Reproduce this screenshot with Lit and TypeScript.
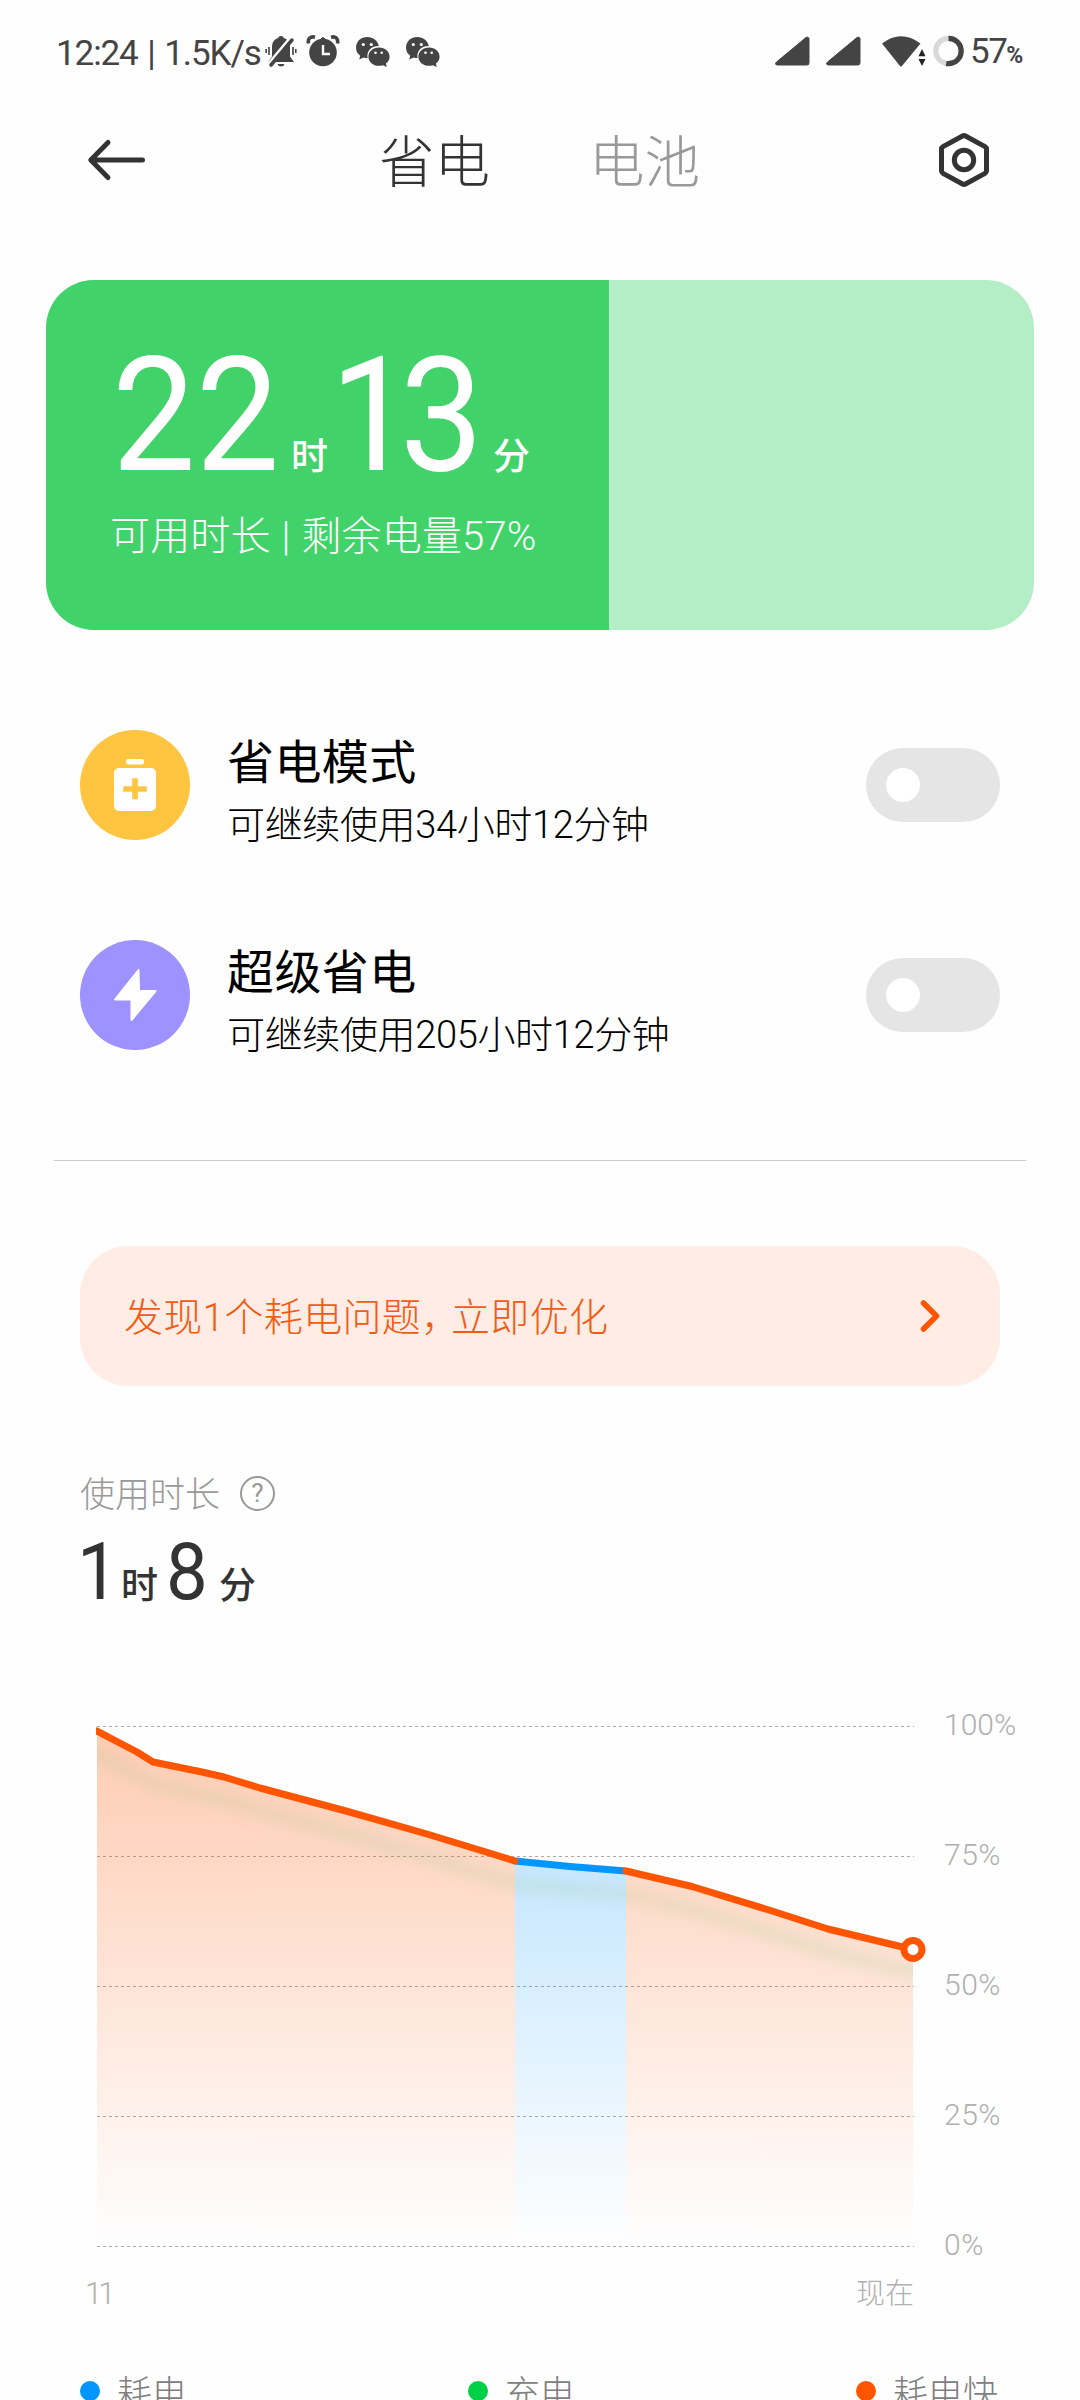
import { LitElement, html, svg, css } from "lit";
import { customElement, property } from "lit/decorators.js";

const fonts = css`
  :host {
    font-family: Roboto, "Noto Sans CJK SC", sans-serif;
    font-weight: 300;
  }
  * { box-sizing: border-box; }
  svg { display: block; flex: none; }
`;

@customElement("status-bar")
class StatusBar extends LitElement {
  static styles = [fonts, css`
    :host { display: block; height: 105px; color: #444; }
    .bar { display: flex; align-items: center; height: 105px; padding: 0 55px 0 56px; font-weight: 400; }
    .time { width: 209px; padding-top: 2px; font-size: 35px; line-height: 40px; white-space: nowrap; letter-spacing: -1.1px; word-spacing: 2px; }
    .icons, .right { display: flex; align-items: center; }
    .icons { padding-bottom: 3px; }
    .right { margin-left: auto; padding-bottom: 3px; }
    .bell { margin-right: 9px; }
    .alarm { margin-right: 15px; }
    .chat { margin-right: 14px; }
    .signal { margin-right: 15px; }
    .wifi { margin: 0 6px 0 4px; }
    .pct { width: 61px; padding: 5px 0 0 6px; font-size: 35px; line-height: 40px; white-space: nowrap; letter-spacing: -1.5px; }
    .sign { font-size: 23px; font-weight: 700; letter-spacing: 0; }
  `];

  private chat() {
    return html`<svg class="chat" width="36" height="34" viewBox="0 0 36 34" fill="#444">
      <path d="M12.500 3C5.600 3 1 7.700 1 13.600c0 3.400 1.500 6.200 4.200 8.200l-1 3.700 4.500-2.100c1.200.4 2.500.5 3.800.5C11.500 16.500 16.500 12 23.800 12 22.600 6.600 18.200 3 12.500 3z"/>
      <path d="M24 13.500c-6 0-10.600 4.100-10.600 9.200S18 31.800 24 31.800c1.400 0 2.700-.2 3.800-.6l4 1.800-.9-3.400c2.300-1.700 3.700-4.200 3.700-6.900 0-5.100-4.600-9.200-10.600-9.200z"/>
      <g fill="#fff"><circle cx="8.300" cy="10.500" r="1.600"/><circle cx="16.300" cy="10.500" r="1.600"/><circle cx="20.500" cy="18.800" r="1.300"/><circle cx="26.700" cy="18.800" r="1.300"/></g>
    </svg>`;
  }

  private signal() {
    return html`<svg class="signal" width="36" height="32" viewBox="0 0 36 32"><path d="M1.500 27L31 2.500q2-1.500 3 1V28q0 2-2 2H2q-3-.5-.5-3z" fill="#444" stroke="#444" stroke-width="1" stroke-linejoin="round"/></svg>`;
  }

  render() {
    return html`<div class="bar">
      <div class="time">12:24 | 1.5K/s</div>
      <div class="icons">
        <svg class="bell" width="32" height="34" viewBox="0 0 32 34">
          <path d="M16 2c1.700 0 2.500.8 2.600 2 4.300 1.300 6.400 4.500 6.400 9v9.500l4 5.500H3l4-5.500V13c0-4.500 2.100-7.700 6.400-9 .1-1.200.9-2 2.600-2z" fill="#444"/>
          <path d="M12.500 30h7q-.7 2.500-3.500 2.500T12.500 30z" fill="#444"/>
          <path d="M4 13v8M1.200 15v4M28 13v8M30.800 15v4" stroke="#444" stroke-width="1.600"/>
          <path d="M4 30L25 5" stroke="#fff" stroke-width="4"/>
          <path d="M6 31L27 6" stroke="#444" stroke-width="3.500" stroke-linecap="round"/>
        </svg>
        <svg class="alarm" width="34" height="34" viewBox="0 0 34 34">
          <circle cx="17" cy="18.500" r="13.800" fill="#444"/>
          <path d="M15 5q2-3 4 0z" fill="#444" stroke="#444"/>
          <path d="M2.500 9.500C1.500 4.500 4.500 2 9 3.200M31.500 9.500C32.500 4.500 29.500 2 25 3.200" fill="none" stroke="#444" stroke-width="3.600"/>
          <path d="M17 11v9h7" fill="none" stroke="#fff" stroke-width="2.400"/>
        </svg>
        ${this.chat()}${this.chat()}
      </div>
      <div class="right">
        ${this.signal()}${this.signal()}
        <svg class="wifi" width="46" height="34" viewBox="0 0 46 34">
          <path d="M1 9.500Q20 -5 39.500 9.500L20.800 32.200q-.8.800-1.600 0z" fill="#444"/>
          <path d="M41 14l3.500 8h-7zM41 33l-3.500-8h7z" fill="#fff" stroke="#fff" stroke-width="3"/>
          <path d="M37.500 22.200L41 15l3.500 7.200zM37.500 25L41 32l3.500-7z" fill="#222"/>
        </svg>
        <svg width="31" height="34" viewBox="0 0 31 34">
          <circle cx="15.500" cy="17" r="12.700" fill="none" stroke="#d9d9d9" stroke-width="5.200"/>
          <circle cx="15.500" cy="17" r="12.700" fill="none" stroke="#444" stroke-width="5.200" pathLength="100" stroke-dasharray="53 47" transform="rotate(-90 15.500 17)"/>
        </svg>
        <div class="pct">57<span class="sign">%</span></div>
      </div>
    </div>`;
  }
}

@customElement("page-header")
class PageHeader extends LitElement {
  static styles = [fonts, css`
    :host { display: block; }
    .head { display: flex; align-items: center; height: 110px; padding: 0 88px 0 86px; }
    .tabs { display: flex; gap: 99px; margin: 0 auto 0 233px; padding-top: 8px; font-size: 55.500px; line-height: 64px; color: #333; }
    .idle { color: #999; }
  `];
  render() {
    return html`<div class="head">
      <svg width="60" height="44" viewBox="0 0 60 44"><path d="M22 4.500L4.800 22 22 39.500M5 22h51.500" fill="none" stroke="#333" stroke-width="5" stroke-linecap="round" stroke-linejoin="round"/></svg>
      <div class="tabs"><span>省电</span><span class="idle">电池</span></div>
      <svg width="56" height="58" viewBox="0 0 56 58" fill="none" stroke="#333" stroke-width="5">
        <path d="M26.500 5Q28 4.200 29.500 5L49 15.600Q50.500 16.500 50.500 18.200V39.800Q50.500 41.500 49 42.400L29.500 53Q28 53.800 26.500 53L7 42.400Q5.500 41.500 5.500 39.800V18.200Q5.500 16.500 7 15.600z"/>
        <circle cx="28" cy="29" r="9.700"/>
      </svg>
    </div>`;
  }
}

@customElement("battery-card")
class BatteryCard extends LitElement {
  @property({ type: Number }) level = 0;
  static styles = [fonts, css`
    :host { display: block; margin: 65px 46px 0; }
    .card { height: 350px; border-radius: 48px; background: #b3eec6; overflow: hidden; color: #fff; }
    .fill { height: 350px; background: #41d369; padding: 66px 0 0 64px; white-space: nowrap; }
    .big { display: flex; align-items: baseline; height: 140px; line-height: 140px; font-size: 160px; font-weight: 400; padding-left: 2px; }
    .hour, .minute { transform: scaleX(0.93); transform-origin: left; }
    .hour { width: 180px; }
    .minute { width: 163px; letter-spacing: -15px; }
    .unit { font-size: 37px; font-weight: 500; }
    .unit-hour { width: 39px; margin-left: -1px; }
    .sub { margin-top: 27px; font-size: 40px; line-height: 48px; letter-spacing: 0.15px; word-spacing: 1px; }
  `];
  render() {
    return html`<div class="card"><div class="fill" style="width:${this.level}%">
      <div class="big"><span class="hour">22</span><span class="unit unit-hour">时</span><span class="minute">13</span><span class="unit">分</span></div>
      <div class="sub">可用时长 | 剩余电量${this.level}%</div>
    </div></div>`;
  }
}

@customElement("mode-row")
class ModeRow extends LitElement {
  @property() name = "";
  @property() detail = "";
  @property() kind = "saver";
  static styles = [fonts, css`
    :host { display: block; margin: 0 80px; }
    .row { display: flex; align-items: center; height: 110px; }
    .text { flex: 1; height: 110px; padding: 6px 0 0 37px; color: #000; white-space: nowrap; }
    .name { font-size: 47px; line-height: 54px; font-weight: 400; letter-spacing: 0.4px; }
    .detail { margin-top: 13px; font-size: 38px; line-height: 45px; letter-spacing: -0.35px; }
    .toggle { width: 134px; height: 74px; border-radius: 37px; background: #e5e5e5; padding: 20px; }
    .knob { width: 34px; height: 34px; border-radius: 17px; background: #fff; }
  `];
  private icon() {
    return this.kind === "saver"
      ? html`<svg width="110" height="110" viewBox="0 0 110 110">
          <circle cx="55" cy="55" r="55" fill="#ffc541"/>
          <rect x="46" y="29" width="18" height="5.500" rx="2" fill="#fff"/>
          <rect x="34" y="38" width="42" height="43" rx="5" fill="#fff"/>
          <path d="M55 51v15.500M46 59h18" stroke="#ffc541" stroke-width="5.600" stroke-linecap="square"/>
        </svg>`
      : html`<svg width="110" height="110" viewBox="0 0 110 110">
          <circle cx="55" cy="55" r="55" fill="#9d92ff"/>
          <path d="M58.500 30L35 59.500H51.500V80L75.500 51H59z" fill="#fff" stroke="#fff" stroke-width="2" stroke-linejoin="round"/>
        </svg>`;
  }
  render() {
    return html`<div class="row">${this.icon()}
      <div class="text"><div class="name">${this.name}</div><div class="detail">${this.detail}</div></div>
      <div class="toggle"><div class="knob"></div></div>
    </div>`;
  }
}

type Point = [number, number];
const before: Point[] = [[97, 1731], [137, 1752], [153, 1762], [202, 1772], [224, 1777], [260, 1788], [346, 1811], [427, 1834], [486, 1852], [515, 1861]];
const slow: Point[] = [[515, 1861], [570, 1866.500], [626, 1871]];
const after: Point[] = [[626, 1871], [692, 1886.500], [769, 1910], [828, 1929], [913, 1949.500]];
const trace = (pts: Point[]) => pts.map((p) => p.join(",")).join(" ");
const area = (pts: Point[]) => `${trace(pts)} ${pts[pts.length - 1][0]},2246 ${pts[0][0]},2246`;

@customElement("usage-chart")
class UsageChart extends LitElement {
  static styles = [fonts, css`
    :host { display: block; color: #b0b0b0; font-size: 30px; }
    .plot { display: flex; padding-left: 80px; height: 560px; }
    .levels { display: flex; flex-direction: column; padding: 0 0 0 16px; margin-top: -40px; }
    .level { height: 130px; line-height: 130px; letter-spacing: 0.5px; }
    .level:first-child { letter-spacing: 0; }
    .times { display: flex; justify-content: space-between; margin: 12px 166px 0 85px; line-height: 44px; font-size: 29px; }
    .start { letter-spacing: -4px; font-size: 31px; }
  `];
  render() {
    const whole = [...before, ...slow.slice(1), ...after.slice(1)];
    const shadow: Point[] = [[60, 1735], ...whole.map(([x, y]): Point => [x, y + 23]), [960, 1985]];
    return html`<div class="plot">
      <svg width="848" height="560" viewBox="80 1700 848 560" fill="none">
        <defs>
          <linearGradient id="warm" gradientUnits="userSpaceOnUse" x1="0" y1="1726" x2="0" y2="2246"><stop offset="0" stop-color="#ff5500" stop-opacity=".3"/><stop offset="1" stop-color="#ff5500" stop-opacity="0"/></linearGradient>
          <linearGradient id="cool" gradientUnits="userSpaceOnUse" x1="0" y1="1726" x2="0" y2="2246"><stop offset="0" stop-color="#0095ff" stop-opacity=".3"/><stop offset="1" stop-color="#0095ff" stop-opacity="0"/></linearGradient>
          <filter id="soft" filterUnits="userSpaceOnUse" x="40" y="1700" width="940" height="320"><feGaussianBlur stdDeviation="6"/></filter>
          <clipPath id="under"><polygon points=${area(whole)}/></clipPath>
          <clipPath id="edge"><rect x="96" y="1700" width="840" height="560"/></clipPath>
        </defs>
        ${[0, 1, 2, 3, 4].map((i) => svg`<path d="M97 ${1726.5 + i * 130}H914" stroke="#aaa" stroke-width="1" stroke-dasharray="3 3"/>`)}
        <polygon points=${area(before)} fill="url(#warm)"/>
        <polygon points=${area(slow)} fill="url(#cool)"/>
        <polygon points=${area(after)} fill="url(#warm)"/>
        <g clip-path="url(#under)"><polyline points=${trace(shadow)} stroke="#90c080" stroke-opacity=".15" stroke-width="15" filter="url(#soft)"/></g>
        <g stroke-width="7" stroke-linejoin="round" clip-path="url(#edge)">
          <polyline points=${trace(slow)} stroke="#0095ff"/>
          <polyline points=${trace(before)} stroke="#ff5500" stroke-linecap="round"/>
          <polyline points=${trace(after)} stroke="#ff5500" stroke-linecap="round"/>
        </g>
        <circle cx="913" cy="1949.500" r="9" fill="#fff" stroke="#ff5500" stroke-width="7"/>
      </svg>
      <div class="levels">${[100, 75, 50, 25, 0].map((n) => html`<div class="level">${n}%</div>`)}</div>
    </div>
    <div class="times"><span class="start">11</span><span>现在</span></div>`;
  }
}

@customElement("app-root")
class AppRoot extends LitElement {
  static styles = [fonts, css`
    :host { display: block; width: 1080px; height: 2400px; overflow: hidden; background: #fefefe; }
    .modes { display: flex; flex-direction: column; gap: 100px; padding: 100px 0 110px; }
    .rule { height: 1px; margin: 0 54px; background: #ccc; }
    .notice { display: flex; align-items: center; justify-content: space-between; height: 140px; margin: 85px 80px 0; padding: 0 58px 0 44px; border-radius: 48px; background: #ffede5; color: #f35a12; font-size: 39px; line-height: 48px; }
    .message { display: flex; padding-top: 4px; letter-spacing: 0.3px; }
    .comma { width: 30px; font-feature-settings: "halt"; }
    .label { display: flex; align-items: center; gap: 20px; height: 44px; margin: 85px 80px 0; color: #999; font-size: 35px; line-height: 44px; }
    .caption { padding-top: 5px; }
    .question { width: 35px; height: 35px; border: 2.500px solid #999; border-radius: 50%; display: flex; align-items: center; justify-content: center; font-size: 26px; line-height: 30px; font-weight: 400; }
    .value { display: flex; align-items: baseline; margin: 17px 80px 0; height: 80px; line-height: 80px; font-size: 79px; font-weight: 400; color: #333; }
    .unit { font-size: 37px; font-weight: 500; }
    .one, .eight { transform: scaleX(0.94); transform-origin: left; }
    .one { width: 44px; margin-left: -3px; }
    .eight { width: 53px; }
    .hour { width: 45px; }
    .chart { margin-top: 88px; }
    .legend { display: flex; margin: 50px 0 0 80px; color: #808080; font-size: 35px; line-height: 50px; height: 50px; }
    .entry { display: flex; align-items: center; width: 388px; white-space: nowrap; }
    .entry:last-child { width: auto; }
    .dot { width: 20px; height: 20px; margin-right: 17px; border-radius: 50%; }
    .entry-name { padding-top: 8px; }
    .blue { background: #0095ff; }
    .green { background: #00d046; }
    .orange { background: #ff5500; }
  `];
  render() {
    return html`
      <status-bar></status-bar>
      <page-header></page-header>
      <battery-card .level=${57}></battery-card>
      <div class="modes">
        <mode-row kind="saver" name="省电模式" detail="可继续使用34小时12分钟"></mode-row>
        <mode-row kind="ultra" name="超级省电" detail="可继续使用205小时12分钟"></mode-row>
      </div>
      <div class="rule"></div>
      <div class="notice"><span class="message"><span>发现1个耗电问题</span><span class="comma">，</span><span>立即优化</span></span>
        <svg width="24" height="36" viewBox="0 0 24 36"><path d="M5.500 5L18.500 18 5.500 31" fill="none" stroke="#ff5500" stroke-width="5.500" stroke-linecap="round" stroke-linejoin="round"/></svg>
      </div>
      <div class="label"><span class="caption">使用时长</span><span class="question">?</span></div>
      <div class="value"><span class="one">1</span><span class="unit hour">时</span><span class="eight">8</span><span class="unit">分</span></div>
      <usage-chart class="chart"></usage-chart>
      <div class="legend">
        <div class="entry"><span class="dot blue"></span><span class="entry-name">耗电</span></div>
        <div class="entry"><span class="dot green"></span><span class="entry-name">充电</span></div>
        <div class="entry"><span class="dot orange"></span><span class="entry-name">耗电快</span></div>
      </div>`;
  }
}
